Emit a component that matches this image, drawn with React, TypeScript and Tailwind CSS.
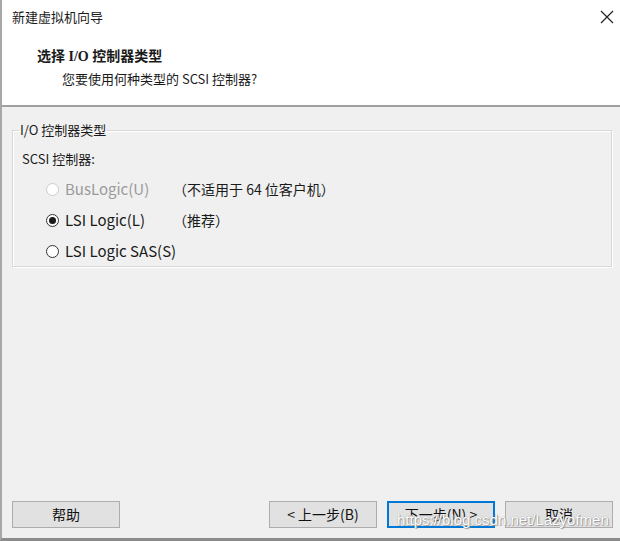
import React from "react";

const font = { fontFamily: '"Noto Sans CJK SC", "Noto Sans", sans-serif' };

function Radio({ checked, disabled }: { checked?: boolean; disabled?: boolean }) {
  return (
    <span
      className={`flex h-[13px] w-[13px] shrink-0 items-center justify-center rounded-full border bg-white ${
        disabled ? "border-[#cccccc] bg-[#f7f7f7]" : "border-[#333333]"
      }`}
    >
      {checked && <span className="h-[7px] w-[7px] rounded-full bg-[#1a1a1a]" />}
    </span>
  );
}

function Btn({ children, primary }: { children: React.ReactNode; primary?: boolean }) {
  return (
    <button
      className={`h-[27px] w-[108px] bg-[#e1e1e1] text-[14px] text-[#111] ${
        primary ? "border-2 border-[#0078d7]" : "border border-[#adadad]"
      }`}
    >
      {children}
    </button>
  );
}

export default function App() {
  const options = [
    { label: "BusLogic(U)", note: "（不适用于 64 位客户机）", disabled: true },
    { label: "LSI Logic(L)", note: "（推荐）", checked: true },
    { label: "LSI Logic SAS(S)" },
  ];

  return (
    <div className="relative flex h-[541px] w-[620px] flex-col overflow-hidden border-b-[3px] border-l-2 border-b-[#8c8c8c] border-l-[#a8a8a8] bg-[#f0f0f0] text-[#1a1a1a]" style={font}>
      <div className="flex h-[107px] shrink-0 flex-col border-b-2 border-[#a0a0a0] bg-white">
        <div className="flex h-[34px] items-center justify-between pl-[10px] pr-[6px]">
          <span className="text-[13px]">新建虚拟机向导</span>
          <svg width="14" height="14" viewBox="0 0 14 14">
            <path d="M1 1 L13 13 M13 1 L1 13" stroke="#222" strokeWidth="1.2" />
          </svg>
        </div>
        <div className="pl-[35px] pt-[14px] text-[14px] font-bold leading-[18px]" style={{ fontFamily: '"Liberation Serif", "Noto Sans CJK SC", serif' }}>
          选择 I/O 控制器类型
        </div>
        <div className="pl-[60px] pt-[4px] text-[13px] leading-[18px]">您要使用何种类型的 SCSI 控制器?</div>
      </div>

      <div className="flex flex-1 flex-col pl-[10px] pr-[7px] pt-[15px]">
        <fieldset className="mr-[1px] h-[145px] border border-[#d8d8d8] pl-[9px] pr-[9px] shadow-[inset_1px_1px_0_#ffffff,1px_1px_0_#ffffff]">
          <legend className="ml-[-3px] px-[1px] text-[13px] leading-[16px]">I/O 控制器类型</legend>
          <div className="pt-[12px] text-[13px] leading-[18px]">SCSI 控制器:</div>
          <div className="flex flex-col gap-[13px] pl-[24px] pt-[12px]">
            {options.map((o) => (
              <div key={o.label} className="flex h-[18px] items-center">
                <Radio checked={o.checked} disabled={o.disabled} />
                <span className={`ml-[6px] w-[114px] text-[15px] ${o.disabled ? "text-[#9a9a9a]" : ""}`}>{o.label}</span>
                {o.note && <span className="-ml-[6px] text-[14px]">{o.note}</span>}
              </div>
            ))}
          </div>
        </fieldset>

        <div className="mt-auto mb-[10px] flex items-center">
          <Btn>帮助</Btn>
          <div className="ml-auto flex gap-[10px]">
            <Btn>&lt; 上一步(B)</Btn>
            <Btn primary>下一步(N) &gt;</Btn>
            <Btn>取消</Btn>
          </div>
        </div>
      </div>

      <span
        className="pointer-events-none absolute left-[395px] top-[509px] text-[15px] text-white"
        style={{ fontFamily: '"Liberation Sans", sans-serif', textShadow: "0 0 1px #8a8a8a, 1px 1px 1px #9a9a9a" }}
      >
        https://blog.csdn.net/Lazyofmen
      </span>
    </div>
  );
}
